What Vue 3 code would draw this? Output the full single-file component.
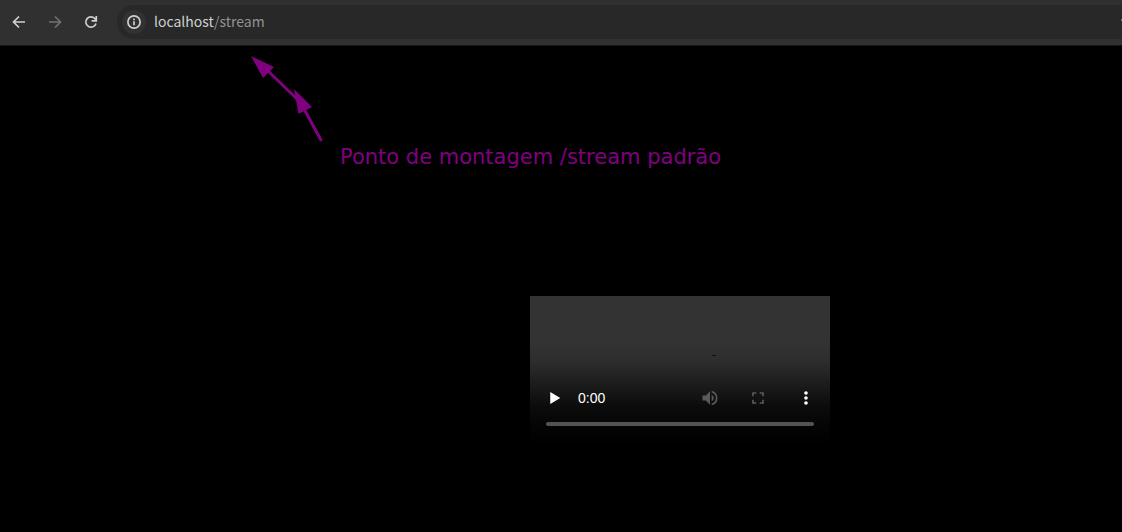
<script setup>
import { ref } from 'vue'

const address = { host: 'localhost', path: '/stream' }
const position = ref(0)
</script>

<template>
  <div class="window">
    <header class="toolbar">
      <button class="nav" type="button" aria-label="Back">
        <svg viewBox="0 0 16 16" width="16" height="16"><path d="M14 8H3M8 2.5 2.5 8 8 13.5" /></svg>
      </button>
      <button class="nav dim" type="button" aria-label="Forward" disabled>
        <svg viewBox="0 0 16 16" width="16" height="16"><path d="M2 8h11M8 2.5 13.5 8 8 13.5" /></svg>
      </button>
      <button class="nav" type="button" aria-label="Reload">
        <svg viewBox="0 0 16 16" width="16" height="16"><path d="M13 9.500A5.200 5.200 0 1 1 12.200 4.900L13.300 6.200M13.300 2v4.800H8.600" /></svg>
      </button>
      <div class="omnibox">
        <button class="info" type="button" aria-label="Site information">
          <svg viewBox="0 0 16 16" width="16" height="16">
            <circle cx="8" cy="8" r="6.1" />
            <path d="M8 7.3v4M8 4.6v1.6" />
          </svg>
        </button>
        <a class="url" href="#stream">{{ address.host }}<span>{{ address.path }}</span></a>
        <svg class="edge" viewBox="0 0 1 2" width="1" height="2"><path d="M0 0h1v2H0z" /></svg>
      </div>
    </header>

    <main class="page">
      <svg class="arrows" viewBox="0 0 100 105" width="100" height="105" aria-hidden="true">
        <path class="shaft" d="M27 25 57 54M64 64 81.5 96" />
        <path d="M11 11 34 22 23 33zM54 44 72 62 58.500 69z" />
      </svg>
      <p class="note">Ponto de montagem /stream padrão</p>

      <section class="player" aria-label="Media player">
        <span class="speck"></span>
        <div class="controls">
          <button class="play" type="button" aria-label="Play">
            <svg viewBox="0 0 24 24" width="20" height="20"><path d="M7.500 4.800v14.400L19.500 12z" /></svg>
          </button>
          <time class="time">0:00</time>
          <button class="off" type="button" aria-label="Mute" disabled>
            <svg viewBox="0 0 24 24" width="20" height="20"><path d="M3 9v6h4l5 5V4L7 9H3zm13.500 3A4.500 4.500 0 0 0 14 7.970v8.050A4.500 4.500 0 0 0 16.500 12zM14 3.230v2.060a7 7 0 0 1 0 13.420v2.060a9 9 0 0 0 0-17.540z" /></svg>
          </button>
          <button class="off" type="button" aria-label="Full screen" disabled>
            <svg viewBox="0 0 24 24" width="20" height="20"><path d="M7 14H5v5h5v-2H7v-3zM5 10h2V7h3V5H5v5zm12 7h-3v2h5v-5h-2v3zM14 5v2h3v3h2V5h-5z" /></svg>
          </button>
          <button type="button" aria-label="More options">
            <svg viewBox="0 0 24 24" width="20" height="20"><circle cx="12" cy="6" r="2.200" /><circle cx="12" cy="12" r="2.200" /><circle cx="12" cy="18" r="2.200" /></svg>
          </button>
        </div>
        <input v-model="position" class="seek" type="range" min="0" max="100" aria-label="Seek" />
      </section>
    </main>
  </div>
</template>

<style>
html,
body {
  background: #000;
}
</style>

<style scoped>
.window {
  min-height: 100vh;
  overflow: hidden;
  background: #000;
  font-family: "Liberation Sans", Arial, sans-serif;
}

button {
  display: grid;
  place-items: center;
  padding: 0;
  border: 0;
  background: none;
  color: inherit;
}

.toolbar {
  display: flex;
  align-items: center;
  gap: 8px;
  padding: 5px 0 6px 5px;
  background: #303030;
  border-bottom: 1px solid #161616;
}

.nav {
  width: 28px;
  height: 28px;
  color: #d0d0d0;
}

.nav.dim {
  color: #717171;
}

.nav svg,
.info svg {
  fill: none;
  stroke: currentColor;
  stroke-width: 1.7;
}

.omnibox {
  display: flex;
  flex: 1;
  align-items: center;
  gap: 8px;
  height: 34px;
  margin-left: 4px;
  padding-left: 5px;
  border-radius: 17px 0 0 17px;
  background: #282828;
}

.info {
  width: 24px;
  height: 24px;
  border-radius: 50%;
  background: #323232;
  color: #d0d0d0;
}

.url {
  padding-bottom: 2px;
  color: #d0d0d0;
  font: 14px/20px "Noto Sans CJK JP", "Noto Sans", sans-serif;
  text-decoration: none;
}

.url span {
  color: #929292;
}

.edge {
  margin: 0 0 4px auto;
  fill: #777;
}

.page {
  position: relative;
  padding: 250px 0 0 530px;
}

.arrows {
  position: absolute;
  top: -1px;
  left: 240px;
  fill: #800080;
}

.shaft {
  fill: none;
  stroke: #800080;
  stroke-width: 3;
}

.note {
  position: absolute;
  top: 98px;
  left: 340px;
  margin: 0;
  color: #800080;
  font: 21px/26px "DejaVu Sans", sans-serif;
  white-space: nowrap;
}

.player {
  position: relative;
  display: flex;
  flex-direction: column;
  justify-content: flex-end;
  width: 300px;
  height: 150px;
  background: linear-gradient(#333 0, #333 44px, #2d2d2d 66px, #1c1c1c 88px, #0c0c0c 110px, #040404 130px, #000 150px);
}

.speck {
  position: absolute;
  top: 59px;
  left: 182px;
  width: 4px;
  height: 1px;
  background: #111;
}

.controls {
  display: flex;
  align-items: center;
  color: #fff;
}

.controls button {
  width: 48px;
  height: 48px;
}

.controls svg {
  fill: currentColor;
}

.controls .off {
  color: #5a5a5a;
}

.time {
  flex: 1;
  font-size: 14px;
  line-height: 20px;
}

.seek {
  height: 4px;
  margin: 0 16px 20px;
  appearance: none;
  border-radius: 2px;
  background: #525252;
}

.seek::-webkit-slider-thumb {
  appearance: none;
  width: 0;
  height: 0;
}
</style>
